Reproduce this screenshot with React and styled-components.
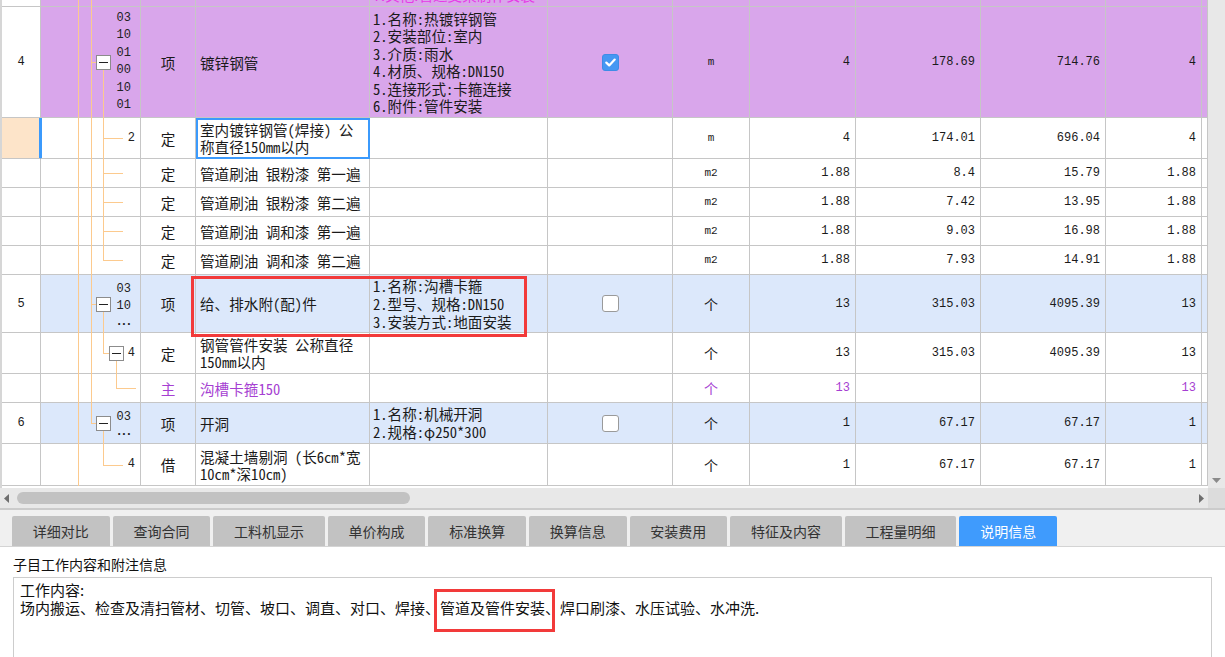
import React from "react";
import styled, { createGlobalStyle } from "styled-components";

const PURPLE = "#d9a6eb";
const BLUE = "#dce8fb";
const PEACH = "#fde4c9";
const LINE = "#c6c6c6";
const ORANGE = "#fcca8e";
const SEL = "#3b9afc";
const MAIN_TEXT = "#a63fd2";
const RED = "#f23a3a";

const COLS = "39px 100px 55px 174px 178px 125px 77px 106px 125px 125px 96px 6px";

const GlobalStyle = createGlobalStyle`
  html, body { margin: 0; padding: 0; background: #fff; }
  body {
    font-family: "Noto Sans CJK SC", "Noto Sans", sans-serif;
    font-size: 14px;
    color: #1a1a1a;
    overflow: hidden;
  }
  #root { width: 1225px; height: 657px; }
`;

const Page = styled.div`
  width: 1225px;
  height: 657px;
  display: flex;
  flex-direction: column;
  overflow: hidden;
`;

const GridArea = styled.div`
  display: flex;
  height: 488px;
  flex: none;
`;

const Viewport = styled.div`
  flex: 1;
  overflow: hidden;
  border-left: 2px solid #d6d6d6;
  background: #fff;
`;

const VScroll = styled.div`
  width: 17px;
  background: #e8e8e8;
  display: flex;
  flex-direction: column;
  justify-content: flex-end;
  align-items: center;
  padding-bottom: 5px;
  box-sizing: border-box;
`;

const Row = styled.div`
  position: relative;
  display: grid;
  grid-template-columns: ${COLS};
  height: ${(p) => p.$h}px;
  background: ${(p) => p.$bg || "#fff"};
`;

const Cell = styled.div`
  position: relative;
  box-sizing: border-box;
  min-width: 0;
  border-right: 1px solid ${LINE};
  border-bottom: 1px solid ${LINE};
  display: flex;
  align-items: center;
  overflow: hidden;
`;

const NumCell = styled(Cell)`
  background: ${(p) => (p.$sel ? PEACH : "#fff")};
  justify-content: center;
  font-family: "Liberation Mono", monospace;
  font-size: 12px;
  ${(p) => (p.$sel ? `border-right-color: ${SEL}; box-shadow: inset -1px 0 0 ${SEL};` : "")}
`;

const TreeCell = styled(Cell)`
  justify-content: flex-end;
  padding-right: ${(p) => p.$pr}px;
  overflow: visible;
  ${(p) => (p.$sel ? `box-shadow: inset 1px 0 0 ${SEL};` : "")}
`;

const TreeSvg = styled.svg`
  position: absolute;
  left: 0;
  top: 0;
  z-index: 0;
  pointer-events: none;
`;

const Codes = styled.div`
  position: relative;
  z-index: 1;
  display: flex;
  flex-direction: column;
  align-items: flex-end;
  font-family: "Liberation Mono", monospace;
  font-size: 12px;
  line-height: ${(p) => p.$lh}px;
  color: #222;
`;

const Dots = styled.span`
  font-family: "Liberation Sans", sans-serif;
  font-weight: bold;
  font-size: 12px;
  letter-spacing: 1.5px;
  line-height: 1;
  margin-right: -1px;
`;

const TypeCell = styled(Cell)`
  justify-content: center;
  font-size: 14.6px;
  color: ${(p) => (p.$main ? MAIN_TEXT : "#1a1a1a")};
`;

const NameCell = styled(Cell)`
  padding-left: 4px;
  padding-right: 2px;
  font-size: 14.6px;
  line-height: 17px;
  font-feature-settings: "hwid";
  color: ${(p) => (p.$main ? MAIN_TEXT : "#1a1a1a")};
  white-space: pre;
  ${(p) => (p.$sel ? `outline: 2px solid ${SEL}; outline-offset: -2px;` : "")}
`;

const Lines = styled.div`
  display: flex;
  flex-direction: column;
`;

const FeatCell = styled(Cell)`
  padding-left: 3px;
  font-size: 14.6px;
  font-feature-settings: "hwid";
  line-height: ${(p) => p.$lh}px;
  white-space: nowrap;
`;

const TopText = styled(Cell)`
  align-items: flex-end;
  padding-left: 3px;
  color: #e63ce6;
  font-size: 14.6px;
  line-height: 17px;
  white-space: nowrap;
  & > span {
    margin-bottom: 3px;
  }
`;

const CheckCell = styled(Cell)`
  justify-content: center;
`;

const Box = styled.span`
  width: 17px;
  height: 17px;
  box-sizing: border-box;
  border-radius: 3px;
  display: flex;
  align-items: center;
  justify-content: center;
  background: ${(p) => (p.$on ? "#4597f3" : "#fff")};
  border: 1px solid ${(p) => (p.$on ? "#3d8ce6" : "#9a9a9a")};
`;

const UnitCell = styled(Cell)`
  justify-content: center;
  font-family: ${(p) => (p.$mono ? '"Liberation Mono", monospace' : '"Noto Sans CJK SC", sans-serif')};
  font-size: ${(p) => (p.$mono ? "11px" : "14px")};
  color: ${(p) => (p.$main ? MAIN_TEXT : "#1a1a1a")};
`;

const NumVal = styled(Cell)`
  justify-content: flex-end;
  padding-right: 5px;
  font-family: "Liberation Mono", monospace;
  font-size: 12px;
  color: ${(p) => (p.$main ? MAIN_TEXT : "#1a1a1a")};
`;

const Mark = styled.div`
  position: absolute;
  left: 189px;
  top: 1px;
  width: 336px;
  height: 61px;
  box-sizing: border-box;
  border: 3px solid ${RED};
  z-index: 5;
  pointer-events: none;
`;

const HScroll = styled.div`
  height: 20px;
  flex: none;
  display: flex;
  align-items: center;
  background: #e8e8e8;
`;

const HTrack = styled.div`
  flex: 1;
  height: 100%;
  display: flex;
  align-items: center;
  padding: 0 4px 0 4px;
  box-sizing: border-box;
`;

const Thumb = styled.div`
  width: 393px;
  height: 12px;
  border-radius: 6px;
  background: #c2c2c2;
  margin-left: 8px;
`;

const Spacer = styled.div`
  flex: 1;
`;

const Corner = styled.div`
  width: 17px;
  height: 100%;
  background: #dcdcdc;
`;

const TabStrip = styled.div`
  height: 39px;
  flex: none;
  box-sizing: border-box;
  background: #f0f0f0;
  border-top: 2px solid #cbcbcb;
  border-bottom: 1px solid #d4d4d4;
  display: flex;
  align-items: flex-end;
  gap: 3px;
  padding-left: 12px;
`;

const Tab = styled.div`
  height: 30px;
  padding: 0 20.8px;
  display: flex;
  align-items: center;
  border-radius: 2px 2px 0 0;
  background: ${(p) => (p.$active ? "#3f9bfd" : "#c2c2c2")};
  color: ${(p) => (p.$active ? "#fff" : "#333")};
  font-size: 14px;
  white-space: nowrap;
`;

const Info = styled.div`
  flex: 1;
  display: flex;
  flex-direction: column;
  padding: 7px 13px 0 13px;
  background: #fff;
  min-height: 0;
`;

const Label = styled.div`
  line-height: 20px;
  font-size: 14px;
  color: #111;
  margin-bottom: 3px;
`;

const TextBox = styled.div`
  flex: 1;
  border: 1px solid #cdcdcd;
  border-bottom: none;
  padding: 3px 6px;
  font-size: 15px;
  line-height: 18px;
  color: #111;
`;

const Highlight = styled.span`
  position: relative;
  display: inline-block;
  &::after {
    content: "";
    position: absolute;
    left: -6px;
    right: -10px;
    top: -10px;
    bottom: -15px;
    border: 3px solid ${RED};
  }
`;

function Tree({ h, spec }) {
  const mid = Math.floor(h / 2) + 0.5;
  const els = [];
  (spec.full || []).forEach((x, i) =>
    els.push(<line key={"f" + i} x1={x + 0.5} y1={0} x2={x + 0.5} y2={h} stroke={ORANGE} />)
  );
  (spec.half || []).forEach((x, i) =>
    els.push(<line key={"h" + i} x1={x + 0.5} y1={0} x2={x + 0.5} y2={mid} stroke={ORANGE} />)
  );
  if (spec.stub)
    els.push(<line key="s" x1={spec.stub[0]} y1={mid} x2={spec.stub[1]} y2={mid} stroke={ORANGE} />);
  if (spec.box) {
    const { cx, from } = spec.box;
    const left = cx - 7;
    els.push(<line key="bs" x1={from} y1={mid} x2={left} y2={mid} stroke={ORANGE} />);
    els.push(<line key="bc" x1={cx + 0.5} y1={mid + 7} x2={cx + 0.5} y2={h} stroke={ORANGE} />);
    els.push(
      <rect key="br" x={left + 0.5} y={mid - 7} width={14} height={14} fill="#fff" stroke="#8c8c8c" />
    );
    els.push(<line key="bm" x1={left + 3} y1={mid} x2={left + 12} y2={mid} stroke="#222" />);
  }
  return (
    <TreeSvg width="99" height={h} viewBox={`0 0 99 ${h}`}>
      {els}
    </TreeSvg>
  );
}

function Check({ on }) {
  return (
    <Box $on={on}>
      {on && (
        <svg width="11" height="9" viewBox="0 0 11 9">
          <path d="M1.3 4.6 L4.2 7.4 L9.7 1.6" fill="none" stroke="#fff" strokeWidth="2.2" strokeLinecap="round" strokeLinejoin="round" />
        </svg>
      )}
    </Box>
  );
}

const rows = [
  {
    h: 111, num: "4", bg: PURPLE, codes: ["03", "10", "01", "00", "10", "01"], lh: 17.5, pr: 9,
    tree: { full: [37, 50], box: { cx: 62, from: 50 } },
    type: "项", name: ["镀锌钢管"],
    feat: ["1.名称:热镀锌钢管", "2.安装部位:室内", "3.介质:雨水", "4.材质、规格:DN150", "5.连接形式:卡箍连接", "6.附件:管件安装"],
    featLh: 17.5, check: "on", unit: "m", mono: true, qty: "4", price: "178.69", total: "714.76", last: "4",
  },
  {
    h: 41, sel: true, codes: ["2"], lh: 17, pr: 5,
    tree: { full: [37, 50, 62], stub: [62, 82] },
    type: "定", name: ["室内镀锌钢管(焊接) 公", "称直径150mm以内"],
    unit: "m", mono: true, qty: "4", price: "174.01", total: "696.04", last: "4",
  },
  {
    h: 29, tree: { full: [37, 50, 62], stub: [62, 82] }, type: "定", name: ["管道刷油 银粉漆 第一遍"],
    unit: "m2", mono: true, qty: "1.88", price: "8.4", total: "15.79", last: "1.88",
  },
  {
    h: 29, tree: { full: [37, 50, 62], stub: [62, 82] }, type: "定", name: ["管道刷油 银粉漆 第二遍"],
    unit: "m2", mono: true, qty: "1.88", price: "7.42", total: "13.95", last: "1.88",
  },
  {
    h: 29, tree: { full: [37, 50, 62], stub: [62, 82] }, type: "定", name: ["管道刷油 调和漆 第一遍"],
    unit: "m2", mono: true, qty: "1.88", price: "9.03", total: "16.98", last: "1.88",
  },
  {
    h: 29, tree: { full: [37, 50], half: [62], stub: [62, 82] }, type: "定", name: ["管道刷油 调和漆 第二遍"],
    unit: "m2", mono: true, qty: "1.88", price: "7.93", total: "14.91", last: "1.88",
  },
  {
    h: 58, num: "5", bg: BLUE, codes: ["03", "10", "..."], lh: 17, pr: 9,
    tree: { full: [37, 50], box: { cx: 62, from: 50 } },
    type: "项", name: ["给、排水附(配)件"],
    feat: ["1.名称:沟槽卡箍", "2.型号、规格:DN150", "3.安装方式:地面安装"], featLh: 18,
    check: "off", unit: "个", qty: "13", price: "315.03", total: "4095.39", last: "13", mark: true,
  },
  {
    h: 41, codes: ["4"], lh: 17, pr: 5,
    tree: { full: [37, 50], half: [62], box: { cx: 75, from: 62 } },
    type: "定", name: ["钢管管件安装 公称直径", "150mm以内"],
    unit: "个", qty: "13", price: "315.03", total: "4095.39", last: "13",
  },
  {
    h: 29, main: true, tree: { full: [37, 50], half: [75], stub: [75, 95] },
    type: "主", name: ["沟槽卡箍150"], unit: "个", qty: "13", price: "", total: "", last: "13",
  },
  {
    h: 41, num: "6", bg: BLUE, codes: ["03", "..."], lh: 15, pr: 9,
    tree: { full: [37], half: [50], box: { cx: 62, from: 50 } },
    type: "项", name: ["开洞"], feat: ["1.名称:机械开洞", "2.规格:φ250*300"], featLh: 18,
    check: "off", unit: "个", qty: "1", price: "67.17", total: "67.17", last: "1",
  },
  {
    h: 42, codes: ["4"], lh: 17, pr: 5,
    tree: { full: [37], half: [62], stub: [62, 82] },
    type: "借", name: ["混凝土墙剔洞 (长6cm*宽", "10cm*深10cm)"],
    unit: "个", qty: "1", price: "67.17", total: "67.17", last: "1",
  },
];

const tabs = ["详细对比", "查询合同", "工料机显示", "单价构成", "标准换算", "换算信息", "安装费用", "特征及内容", "工程量明细", "说明信息"];

function DataRow({ r }) {
  return (
    <Row $h={r.h} $bg={r.bg}>
      <NumCell $sel={r.sel}>{r.num || ""}</NumCell>
      <TreeCell $pr={r.pr || 5} $sel={r.sel}>
        <Tree h={r.h} spec={r.tree} />
        {r.codes && (
          <Codes $lh={r.lh}>
            {r.codes.map((c, i) => (c === "..." ? <Dots key={i}>...</Dots> : <span key={i}>{c}</span>))}
          </Codes>
        )}
      </TreeCell>
      <TypeCell $main={r.main}>{r.type}</TypeCell>
      <NameCell $main={r.main} $sel={r.sel}>
        <Lines>
          {r.name.map((n, i) => (
            <span key={i}>{n}</span>
          ))}
        </Lines>
      </NameCell>
      <FeatCell $lh={r.featLh || 18}>
        {r.feat && (
          <Lines>
            {r.feat.map((f, i) => (
              <span key={i}>{f}</span>
            ))}
          </Lines>
        )}
      </FeatCell>
      <CheckCell>{r.check && <Check on={r.check === "on"} />}</CheckCell>
      <UnitCell $mono={r.mono} $main={r.main}>{r.unit}</UnitCell>
      <NumVal $main={r.main}>{r.qty}</NumVal>
      <NumVal>{r.price}</NumVal>
      <NumVal>{r.total}</NumVal>
      <NumVal $main={r.main}>{r.last}</NumVal>
      <Cell />
      {r.mark && <Mark />}
    </Row>
  );
}

export default function App() {
  return (
    <Page>
      <GlobalStyle />
      <GridArea>
        <Viewport>
          <Row $h={7} $bg={PURPLE}>
            <NumCell />
            <TreeCell $pr={5}>
              <Tree h={7} spec={{ full: [37, 50] }} />
            </TreeCell>
            <Cell />
            <Cell />
            <TopText>
              <span>7.其他:管道支架制作安装</span>
            </TopText>
            <Cell />
            <Cell />
            <Cell />
            <Cell />
            <Cell />
            <Cell />
            <Cell />
          </Row>
          {rows.map((r, i) => (
            <DataRow key={i} r={r} />
          ))}
        </Viewport>
        <VScroll>
          <svg width="9" height="5" viewBox="0 0 9 5">
            <path d="M0 0 L9 0 L4.5 5 Z" fill="#8a8a8a" />
          </svg>
        </VScroll>
      </GridArea>
      <HScroll>
        <HTrack>
          <svg width="5" height="9" viewBox="0 0 5 9">
            <path d="M5 0 L5 9 L0 4.5 Z" fill="#6e6e6e" />
          </svg>
          <Thumb />
          <Spacer />
          <svg width="5" height="9" viewBox="0 0 5 9">
            <path d="M0 0 L0 9 L5 4.5 Z" fill="#6e6e6e" />
          </svg>
        </HTrack>
        <Corner />
      </HScroll>
      <TabStrip>
        {tabs.map((t) => (
          <Tab key={t} $active={t === "说明信息"}>
            {t}
          </Tab>
        ))}
      </TabStrip>
      <Info>
        <Label>子目工作内容和附注信息</Label>
        <TextBox>
          <div>工作内容:</div>
          <div>
            场内搬运、检查及清扫管材、切管、坡口、调直、对口、焊接、<Highlight>管道及管件安装</Highlight>、焊口刷漆、水压试验、水冲洗.
          </div>
        </TextBox>
      </Info>
    </Page>
  );
}
